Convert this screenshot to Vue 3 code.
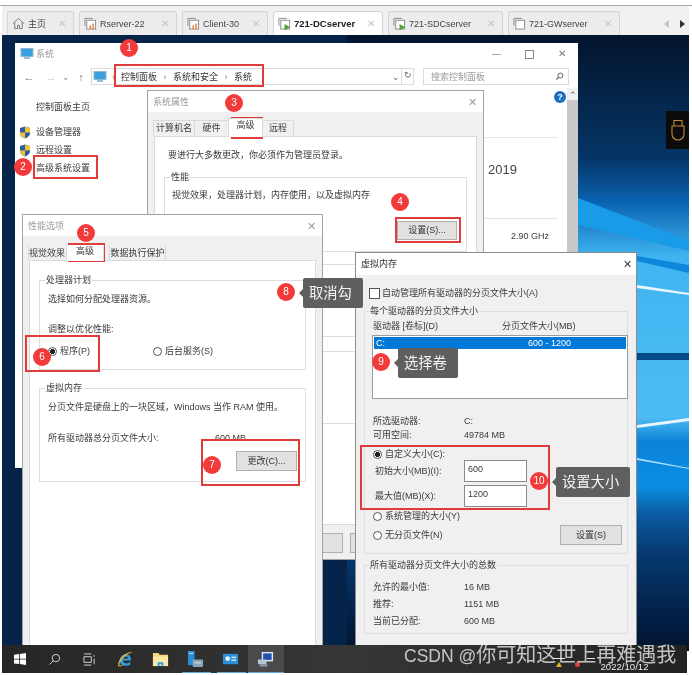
<template>
  <div class="shot">
    <div class="top-strip"></div>

    <div class="tabbar">
      <div v-for="t in tabs" :key="t.name" class="tab" :class="{ on: t.on }" :style="{ width: t.w + 'px' }">
        <svg v-if="t.kind === 'home'" class="tab-ico" viewBox="0 0 14 14">
          <path d="M1 7 7 1.500 13 7M3 6v6.500h3V9h2v3.500h3V6" fill="none" stroke="#777" stroke-width="1" />
        </svg>
        <svg v-else class="tab-ico" viewBox="0 0 14 14">
          <path d="M1 9.500V1.500h8.500" fill="none" stroke="#888" stroke-width="1" />
          <rect x="3" y="3.500" width="9.500" height="9.500" fill="#fff" stroke="#888" stroke-width="1" />
          <path v-if="t.kind === 'bars'" d="M6 13V9h1.500v4zM9 13V7h1.500v6z" fill="#e8762c" />
          <path v-if="t.kind === 'play'" d="M7 7.500l6 3.500-6 3.500z" fill="#4aa52e" />
        </svg>
        <span class="tab-name">{{ t.name }}</span>
        <span class="tab-x">✕</span>
      </div>
      <div class="tab-arrows"><i class="arr-l"></i><i class="arr-r"></i></div>
    </div>

    <div class="desktop">
      <svg class="wall" viewBox="0 0 687 616" preserveAspectRatio="none">
        <defs>
          <linearGradient id="sky" x1="0" y1="0" x2="0" y2="1">
            <stop offset="0" stop-color="#03142c" />
            <stop offset="0.2" stop-color="#053566" />
            <stop offset="0.27" stop-color="#0a62b0" />
            <stop offset="0.36" stop-color="#3fb4f0" />
            <stop offset="0.62" stop-color="#4dbcf4" />
            <stop offset="0.66" stop-color="#0a82d8" />
            <stop offset="0.73" stop-color="#0a8fe4" />
            <stop offset="0.78" stop-color="#0a5aa0" />
            <stop offset="0.84" stop-color="#063a70" />
            <stop offset="0.95" stop-color="#021e44" />
            <stop offset="1" stop-color="#02152f" />
          </linearGradient>
        </defs>
        <rect width="687" height="616" fill="url(#sky)" />
        <rect width="345" height="616" fill="#06244a" />
        <polygon points="576,163 687,206 687,216 576,190" fill="#1a9be8" />
        <polygon points="635,221 687,230 687,238 635,226" fill="#0d87dc" />
        <polygon points="635,250 687,258 687,260 635,253" fill="#e8f6ff" />
        <rect x="635" y="318" width="52" height="7" fill="#064a88" />
        <polygon points="635,390 687,383 687,386 635,393" fill="#e8f6ff" />
        <polygon points="635,423 687,433 687,434 635,425" fill="#a8dcfa" />
      </svg>
    </div>

    <!-- control panel window -->
    <div class="win win-sys">
      <div class="sys-title">
        <svg class="pc" viewBox="0 0 14 12">
          <rect x="1" y="0.500" width="12" height="8" fill="#3aa0e0" stroke="#8fb8d0" />
          <rect x="4" y="9" width="6" height="2" fill="#9cc0d8" />
        </svg>
        <span class="muted">系统</span>
        <span class="grow"></span>
        <span class="ctl">—</span>
        <i class="ctl-max"></i>
        <span class="ctl ctl-x">✕</span>
      </div>
      <div class="sys-nav">
        <span class="nav-arrow dark">←</span>
        <span class="nav-arrow">→</span>
        <span class="nav-caret">⌄</span>
        <span class="nav-arrow dark">↑</span>
        <div class="addr">
          <svg class="pc" viewBox="0 0 14 12">
            <rect x="1" y="0.500" width="12" height="8" fill="#3aa0e0" stroke="#8fb8d0" />
            <rect x="4" y="9" width="6" height="2" fill="#9cc0d8" />
          </svg>
          <span class="crumb first">›</span>
          <span>控制面板</span><span class="crumb">›</span><span>系统和安全</span><span class="crumb">›</span><span>系统</span>
          <span class="grow"></span>
          <span class="addr-end">⌄</span>
          <span class="addr-end refresh">↻</span>
        </div>
        <div class="search">
          <span class="muted">搜索控制面板</span>
          <svg viewBox="0 0 10 10" class="glass"><circle cx="6" cy="4" r="2.800" fill="none" stroke="#555" /><path d="M4 6 1.500 8.500" stroke="#555" stroke-width="1.200" /></svg>
        </div>
      </div>
      <div class="sys-body">
        <div class="side">
          <div class="side-home">控制面板主页</div>
          <div v-for="s in sideLinks" :key="s" class="side-link">
            <svg class="shield" viewBox="0 0 12 13">
              <path d="M6 .5 11 2v5c0 3-2.500 4.500-5 5.500C3.500 11.500 1 10 1 7V2z" fill="#2a5ca8" />
              <path d="M6 .5 11 2v4.500H6zM6 6.500v6C3.500 11.500 1 10 1 6.500z" fill="#f2c230" />
            </svg>
            <span class="link-text">{{ s }}</span>
          </div>
          <div class="side-link plain">高级系统设置</div>
        </div>
        <div class="sys-main">
          <div class="help">?</div>
          <div class="rule rule-a"></div>
          <div class="year">2019</div>
          <div class="rule rule-b"></div>
          <div class="ghz">2.90 GHz</div>
        </div>
        <div class="scroll"><span class="scroll-up">⌃</span></div>
      </div>
    </div>

    <!-- system properties -->
    <div class="win win-props">
      <div class="dlg-title"><span class="muted">系统属性</span><span class="grow"></span><span class="dlg-x">✕</span></div>
      <div class="tabs props-tabs">
        <span class="dtab w42">计算机名</span>
        <span class="dtab w35">硬件</span>
        <span class="dtab w35 on">高级</span>
        <span class="dtab w32">远程</span>
      </div>
      <div class="panel props-panel">
        <div class="props-note">要进行大多数更改，你必须作为管理员登录。</div>
        <div class="group props-g1">
          <span class="legend">性能</span>
          <div>视觉效果，处理器计划，内存使用，以及虚拟内存</div>
          <div class="btn props-btn">设置(S)...</div>
        </div>
        <div class="group props-g2"></div>
        <div class="group props-g3"></div>
      </div>
      <div class="props-foot">
        <span class="btn foot-btn"></span>
        <span class="btn foot-btn"></span>
      </div>
    </div>

    <!-- performance options -->
    <div class="win win-perf">
      <div class="dlg-title perf-title"><span class="muted">性能选项</span><span class="grow"></span><span class="dlg-x">✕</span></div>
      <div class="tabs perf-tabs">
        <span class="dtab w39">视觉效果</span>
        <span class="dtab w38 on">高级</span>
        <span class="dtab w57">数据执行保护</span>
      </div>
      <div class="panel perf-panel">
        <div class="group perf-g1">
          <span class="legend">处理器计划</span>
          <div>选择如何分配处理器资源。</div>
          <div class="perf-adjust">调整以优化性能:</div>
          <div class="perf-radios">
            <span class="radio on"></span><span>程序(P)</span>
            <span class="radio second"></span><span>后台服务(S)</span>
          </div>
        </div>
        <div class="group perf-g2">
          <span class="legend">虚拟内存</span>
          <div>分页文件是硬盘上的一块区域，Windows 当作 RAM 使用。</div>
          <div class="perf-total"><span class="perf-total-l">所有驱动器总分页文件大小:</span><span>600 MB</span></div>
          <div class="btn perf-btn">更改(C)...</div>
        </div>
      </div>
    </div>

    <!-- virtual memory -->
    <div class="win win-vm">
      <div class="dlg-title vm-title"><span>虚拟内存</span><span class="grow"></span><span class="dlg-x dark">✕</span></div>
      <div class="vm-check"><i class="checkbox"></i><span>自动管理所有驱动器的分页文件大小(A)</span></div>
      <div class="group vm-g1">
        <span class="legend">每个驱动器的分页文件大小</span>
        <div class="vm-head"><span class="vm-col">驱动器 [卷标](D)</span><span>分页文件大小(MB)</span></div>
        <div class="vm-list">
          <div class="vm-sel"><span class="vm-sel-c">C:</span><span>600 - 1200</span></div>
        </div>
        <div class="vm-info"><span class="vm-k">所选驱动器:</span><span>C:</span></div>
        <div class="vm-info"><span class="vm-k">可用空间:</span><span>49784 MB</span></div>
        <div class="vm-radio vm-custom"><span class="radio on"></span><span>自定义大小(C):</span></div>
        <div class="vm-field"><span class="vm-flabel">初始大小(MB)(I):</span><div class="vm-input">600</div></div>
        <div class="vm-field"><span class="vm-flabel">最大值(MB)(X):</span><div class="vm-input">1200</div></div>
        <div class="vm-radio vm-sys"><span class="radio"></span><span>系统管理的大小(Y)</span></div>
        <div class="vm-none">
          <div class="vm-radio"><span class="radio"></span><span>无分页文件(N)</span></div>
          <div class="btn vm-set">设置(S)</div>
        </div>
      </div>
      <div class="group vm-g2">
        <span class="legend">所有驱动器分页文件大小的总数</span>
        <div v-for="r in totals" :key="r.k" class="vm-total"><span class="vm-k">{{ r.k }}</span><span>{{ r.v }}</span></div>
      </div>
      <div class="vm-foot">
        <span class="btn vm-foot-btn ok"></span>
        <span class="btn vm-foot-btn"></span>
      </div>
    </div>

    <!-- usb side tab -->
    <div class="usb">
      <svg viewBox="0 0 14 22" class="usb-ico">
        <path d="M3 7V1.500h8V7M1 7h12v8a6 6 0 0 1-12 0z" fill="none" stroke="#c08a38" stroke-width="1.100" />
      </svg>
    </div>

    <!-- annotations -->
    <div v-for="(b, i) in boxes" :key="'b' + i" class="red-box" :style="boxStyle(b)"></div>
    <div v-for="d in dots" :key="d.n" class="dot" :style="{ left: d.x - 9 + 'px', top: d.y - 9 + 'px' }">{{ d.n }}</div>
    <div v-for="t in tips" :key="t.text" class="tip" :style="{ left: t.x + 'px', top: t.y + 'px', width: t.w + 'px' }">{{ t.text }}</div>

    <!-- taskbar -->
    <div class="taskbar">
      <div class="tb-item">
        <svg viewBox="0 0 12 12" class="tb-win"><path d="M0 1.700 5 1v4.700H0zM5.800.9 12 0v5.700H5.800zM0 6.400h5v4.700l-5-.7zM5.800 6.400H12V12l-6.200-.9z" fill="#fff" /></svg>
      </div>
      <div class="tb-item">
        <svg viewBox="0 0 14 14" class="tb-ico"><circle cx="8.500" cy="5.500" r="4" fill="none" stroke="#d8d8d8" /><path d="M5.500 8.500 1.500 12.500" stroke="#d8d8d8" /></svg>
      </div>
      <div class="tb-item">
        <svg viewBox="0 0 14 14" class="tb-ico"><path d="M1 1h8M1 13h8M1 4h8v6H1zM12 2v2M12 6v6" fill="none" stroke="#d8d8d8" /></svg>
      </div>
      <div class="tb-item">
        <svg viewBox="0 0 18 18" class="tb-big">
          <path d="M3 10.500C3 6.500 6 3.500 9.500 3.500s5.500 3 5.500 6.500H6.500c.2 3.500 5 4 7.500 1.500v3c-4 2.500-11 1-11-4z M6.500 8h5.500c-.2-2.500-5-2.500-5.500 0z" fill="#2f9fe0" fill-rule="evenodd" />
          <path d="M16 1.500c-3-1-7 1-11 5C2 9.500.5 14 1.500 16c1 1.200 3.500 0 5.500-1.500-2 .5-4 1.300-4.500.5-.5-1 1-4 3-6.500 3-3.500 7-6.500 9-6.500z" fill="#e8b830" />
        </svg>
      </div>
      <div class="tb-item">
        <svg viewBox="0 0 18 16" class="tb-big">
          <path d="M1 1h6l1 2h9v12H1z" fill="#f5d77e" />
          <rect x="1" y="5" width="16" height="10" fill="#fbe9a8" />
          <path d="M6 15v-4h6v4h-2v-2H8v2z" fill="#2f9fe0" />
        </svg>
      </div>
      <div class="tb-item under">
        <svg viewBox="0 0 18 18" class="tb-big">
          <rect x="1" y="0" width="7" height="15" fill="#2a8fd8" />
          <rect x="2" y="2" width="5" height="1" fill="#bfe2f8" />
          <rect x="6" y="9" width="11" height="8" rx="1" fill="#8aa4b8" />
          <rect x="8" y="12" width="7" height="1" fill="#e6eef4" />
        </svg>
      </div>
      <div class="tb-item under">
        <svg viewBox="0 0 18 14" class="tb-big">
          <rect x="1" y="1" width="16" height="11" fill="#2a8fd8" />
          <circle cx="6" cy="6" r="2.500" fill="#e8f4fc" />
          <rect x="10" y="4" width="5" height="1.500" fill="#cfe8f8" />
          <rect x="10" y="7" width="5" height="1.500" fill="#cfe8f8" />
        </svg>
      </div>
      <div class="tb-item under lit">
        <svg viewBox="0 0 18 18" class="tb-big">
          <rect x="5" y="1" width="12" height="10" fill="#dfe8f2" />
          <rect x="6.500" y="2.500" width="9" height="7" fill="#2450b0" />
          <path d="M1 9h9v5H1z" fill="#b8c4d2" />
          <rect x="3" y="14" width="8" height="2.500" fill="#8c98a8" />
        </svg>
      </div>
      <div class="tray">
        <i class="tray-mark m1"></i>
        <i class="tray-mark m2"></i>
        <i class="tray-warn"></i>
        <i class="tray-err"></i>
        <span class="tray-date">2022/10/12</span>
      </div>
    </div>
    <div class="watermark"><span class="wm-latin">CSDN @</span>你可知这世上再难遇我</div>
  </div>
</template>

<script setup>
const tabs = [
  { name: '主页', kind: 'home', w: 67 },
  { name: 'Rserver-22', kind: 'bars', w: 98 },
  { name: 'Client-30', kind: 'bars', w: 86 },
  { name: '721-DCserver', kind: 'play', w: 110, on: true },
  { name: '721-SDCserver', kind: 'play', w: 115 },
  { name: '721-GWserver', kind: 'plain', w: 112 }
]

const sideLinks = ['设备管理器', '远程设置']

const totals = [
  { k: '允许的最小值:', v: '16 MB' },
  { k: '推荐:', v: '1151 MB' },
  { k: '当前已分配:', v: '600 MB' }
]

const boxes = [
  { x: 114, y: 64, w: 150, h: 23 },
  { x: 33, y: 155, w: 65, h: 24 },
  { x: 231, y: 117, w: 32, h: 22 },
  { x: 395, y: 217, w: 66, h: 26 },
  { x: 68, y: 243, w: 37, h: 19 },
  { x: 25, y: 335, w: 75, h: 37 },
  { x: 201, y: 439, w: 99, h: 47 },
  { x: 360, y: 445, w: 190, h: 65 }
]

const dots = [
  { n: 1, x: 129, y: 48 },
  { n: 2, x: 23, y: 167 },
  { n: 3, x: 234, y: 103 },
  { n: 4, x: 400, y: 202 },
  { n: 5, x: 86, y: 233 },
  { n: 6, x: 42, y: 357 },
  { n: 7, x: 212, y: 465 },
  { n: 8, x: 286, y: 292 },
  { n: 9, x: 381, y: 362 },
  { n: 10, x: 539, y: 481 }
]

const tips = [
  { text: '取消勾', x: 303, y: 278, w: 60 },
  { text: '选择卷', x: 398, y: 348, w: 60 },
  { text: '设置大小', x: 556, y: 467, w: 74 }
]

function boxStyle(b) {
  return { left: b.x + 'px', top: b.y + 'px', width: b.w + 'px', height: b.h + 'px' }
}
</script>

<style>
html,
body {
  margin: 0;
  background: #fff;
}
</style>

<style scoped>
.shot {
  position: relative;
  width: 692px;
  height: 675px;
  overflow: hidden;
  background: #fff;
  font: 9px/12px "Liberation Sans", "Noto Sans CJK SC", sans-serif;
  color: #3a3a3a;
  display: flex;
  flex-direction: column;
  filter: blur(0.4px);
}
.grow {
  flex: 1;
}
.muted {
  color: #9a9a9a;
}

.top-strip {
  height: 5px;
  border-bottom: 1px solid #a8a8a8;
  flex: none;
}
.tabbar {
  height: 29px;
  flex: none;
  margin: 0 3px 0 2px;
  padding: 5px 0 0 5px;
  box-sizing: border-box;
  background: #f1f1f1;
  display: flex;
  gap: 5px;
  position: relative;
}
.tab {
  box-sizing: border-box;
  height: 24px;
  background: #ececec;
  border: 1px solid #d4d4d4;
  border-bottom: 0;
  border-radius: 3px 3px 0 0;
  display: flex;
  align-items: center;
  padding: 0 7px 0 4px;
  font-size: 9px;
  color: #444;
}
.tab.on {
  background: #fff;
  font-weight: bold;
  font-size: 9.500px;
  color: #222;
}
.tab-ico {
  width: 13px;
  height: 13px;
  margin-right: 3px;
  flex: none;
}
.tab-name {
  flex: 1;
  white-space: nowrap;
}
.tab-x {
  color: #c4c4c4;
  font-size: 10px;
  font-weight: normal;
}
.tab-arrows {
  position: absolute;
  right: 4px;
  top: 14px;
  display: flex;
  gap: 11px;
}
.arr-l {
  border: 4px solid transparent;
  border-left: 0;
  border-right: 5px solid #c4c4c4;
}
.arr-r {
  border: 4px solid transparent;
  border-right: 0;
  border-left: 5px solid #333;
}

.desktop {
  flex: none;
  height: 616px;
  margin: 0 3px 0 2px;
}
.wall {
  display: block;
  width: 100%;
  height: 100%;
}

/* windows sit where they were dragged on the desktop */
.win {
  position: absolute;
  box-sizing: border-box;
}
.win-sys {
  left: 15px;
  top: 43px;
  width: 563px;
  height: 425px;
  background: #fff;
  display: flex;
  flex-direction: column;
}
.sys-title {
  height: 22px;
  flex: none;
  display: flex;
  align-items: center;
  padding: 0 6px 0 5px;
  gap: 2px;
}
.pc {
  width: 14px;
  height: 12px;
  flex: none;
}
.ctl {
  width: 33px;
  text-align: center;
  color: #777;
  font-size: 9px;
}
.ctl-max {
  width: 7px;
  height: 7px;
  border: 1px solid #888;
  margin: 0 16px 0 10px;
}
.ctl-x {
  width: 20px;
  font-size: 10px;
}
.sys-nav {
  height: 19px;
  margin-top: 2px;
  flex: none;
  display: flex;
  align-items: center;
  padding-left: 7px;
}
.nav-arrow {
  width: 14px;
  font-size: 11px;
  color: #c8c8c8;
  text-align: center;
}
.nav-arrow.dark {
  color: #777;
}
.nav-arrow + .nav-arrow {
  margin-left: 8px;
}
.nav-caret {
  width: 10px;
  margin: 0 3px 0 3px;
  text-align: center;
  color: #888;
  line-height: 8px;
}
.addr {
  margin-left: 3px;
  width: 323px;
  height: 17px;
  border: 1px solid #dcdcdc;
  box-sizing: border-box;
  display: flex;
  align-items: center;
  padding-left: 1px;
  gap: 6px;
  color: #333;
}
.crumb {
  color: #777;
  margin: 0 0.500px;
}
.crumb.first {
  margin: 0 0 0 -1px;
}
.addr-end {
  width: 11px;
  text-align: center;
  color: #666;
}
.refresh {
  border-left: 1px solid #dcdcdc;
  margin-left: -6px;
  height: 15px;
}
.search {
  margin-left: 9px;
  width: 146px;
  height: 17px;
  border: 1px solid #dcdcdc;
  box-sizing: border-box;
  display: flex;
  align-items: center;
  justify-content: space-between;
  padding: 0 4px 0 7px;
}
.glass {
  width: 9px;
  height: 9px;
}
.sys-body {
  flex: 1;
  display: flex;
  padding-top: 2px;
  min-height: 0;
}
.side {
  width: 132px;
  flex: none;
  padding: 10px 0 0 4px;
  box-sizing: border-box;
}
.side-home {
  margin: 0 0 7px 17px;
  line-height: 18px;
}
.side-link {
  display: flex;
  align-items: center;
  gap: 5px;
  line-height: 18px;
}
.side-link.plain {
  margin-left: 17px;
}
.shield {
  width: 12px;
  height: 13px;
  flex: none;
}
.sys-main {
  flex: 1;
  padding: 3px 9px 0 0;
}
.help {
  width: 12px;
  height: 12px;
  margin-left: auto;
  margin-right: -8px;
  border-radius: 50%;
  background: #1c6fc0;
  color: #fff;
  font-weight: bold;
  font-size: 9px;
  text-align: center;
}
.rule {
  height: 1px;
  background: #e4e4e4;
}
.rule-a {
  margin-top: 34px;
}
.year {
  margin: 22px 0 0 341px;
  font-size: 13px;
  line-height: 20px;
  color: #444;
}
.rule-b {
  margin-top: 38px;
}
.ghz {
  margin-top: 11px;
  padding-right: 9px;
  text-align: right;
}
.scroll {
  width: 11px;
  flex: none;
  background: #c9c9c9;
}
.scroll-up {
  display: block;
  height: 12px;
  background: #f0f0f0;
  text-align: center;
  font-size: 9px;
  line-height: 14px;
  color: #555;
}

.win-props {
  left: 147px;
  top: 90px;
  width: 337px;
  height: 470px;
  background: #f0f0f0;
  border: 1px solid #a4a4a4;
}
.dlg-title {
  height: 21px;
  background: #fff;
  display: flex;
  align-items: center;
  padding: 0 6px 0 5px;
}
.dlg-x {
  width: 10px;
  text-align: center;
  color: #9a9a9a;
  font-size: 11px;
}
.dlg-x.dark {
  color: #333;
}
.tabs {
  display: flex;
  align-items: flex-end;
}
.dtab {
  box-sizing: border-box;
  height: 16px;
  border: 1px solid #dadada;
  border-bottom: 0;
  margin-left: -1px;
  background: #f0f0f0;
  text-align: center;
  line-height: 15px;
  white-space: nowrap;
}
.dtab.on {
  background: #fff;
  height: 19px;
  position: relative;
  z-index: 1;
  margin-bottom: -1px;
  line-height: 13px;
}
.w32 {
  width: 32px;
}
.w35 {
  width: 35px;
}
.w38 {
  width: 38px;
}
.w39 {
  width: 39px;
}
.w42 {
  width: 42px;
}
.w57 {
  width: 57px;
}
.props-tabs {
  height: 16px;
  margin: 8px 0 0 6px;
}
.panel {
  background: #fff;
  border: 1px solid #dadada;
}
.props-panel {
  margin: 0 6px;
  height: 389px;
  box-sizing: border-box;
  padding: 12px 9px 0;
}
.props-note {
  margin-left: 4px;
}
.group {
  position: relative;
  border: 1px solid #dedede;
  box-sizing: border-box;
}
.legend {
  position: absolute;
  top: -7px;
  left: 5px;
  padding: 0 1px;
  background: #fff;
  white-space: nowrap;
}
.props-g1 {
  height: 75px;
  margin-top: 16px;
  padding: 11px 8px 0 7px;
}
.btn {
  box-sizing: border-box;
  background: #e1e1e1;
  border: 1px solid #b0b0b0;
  text-align: center;
  color: #333;
  white-space: nowrap;
}
.props-btn {
  width: 60px;
  height: 19px;
  line-height: 17px;
  margin: 20px 1px 0 auto;
}
.props-g2 {
  height: 73px;
  margin-top: 12px;
}
.props-g3 {
  height: 73px;
  margin-top: 14px;
}
.props-foot {
  display: flex;
  gap: 7px;
  margin: 8px 0 0 135px;
}
.foot-btn {
  width: 60px;
  height: 20px;
  display: block;
}

.win-perf {
  left: 22px;
  top: 214px;
  width: 301px;
  height: 431px;
  background: #f0f0f0;
  border: 1px solid #a4a4a4;
  border-bottom: 0;
}
.perf-tabs {
  height: 12px;
  margin: 12px 0 0 6px;
}
.perf-tabs .dtab {
  height: 15px;
  line-height: 14px;
  margin-top: -3px;
  border-color: transparent #dadada;
}
.perf-tabs .dtab:first-child {
  text-align: right;
  padding-right: 1px;
}
.perf-tabs .dtab:last-child {
  margin-left: 5px;
}
.perf-tabs .dtab.on {
  height: 16px;
  line-height: 11px;
}
.perf-panel {
  margin: 0 6px;
  height: 386px;
  box-sizing: border-box;
  padding: 19px 9px 0;
  border-bottom: 0;
}
.perf-g1 {
  height: 90px;
  padding: 12px 8px 0;
}
.perf-adjust {
  margin-top: 18px;
}
.perf-radios {
  margin-top: 10px;
  display: flex;
  align-items: center;
  gap: 3px;
}
.radio {
  box-sizing: border-box;
  width: 9px;
  height: 9px;
  border: 1px solid #555;
  border-radius: 50%;
  background: #fff;
  flex: none;
  display: block;
}
.radio.on {
  background: radial-gradient(circle, #222 0 2.300px, #fff 2.800px);
}
.radio.second {
  margin-left: 60px;
}
.perf-g2 {
  height: 94px;
  margin-top: 18px;
  padding: 12px 8px 0;
}
.perf-total {
  margin-top: 19px;
  display: flex;
}
.perf-total-l {
  width: 167px;
}
.perf-btn {
  width: 61px;
  height: 20px;
  line-height: 18px;
  margin: 7px 0 0 auto;
}

.win-vm {
  left: 355px;
  top: 252px;
  width: 282px;
  height: 410px;
  background: #f0f0f0;
  border: 1px solid #8c8c8c;
}
.vm-title {
  height: 22px;
  color: #333;
  padding: 0 4px 0 5px;
}
.vm-check {
  display: flex;
  align-items: center;
  gap: 2px;
  margin: 12px 0 0 13px;
}
.checkbox {
  width: 9px;
  height: 9px;
  border: 1px solid #555;
  background: #fff;
  display: block;
  flex: none;
}
.win-vm .legend {
  background: #f0f0f0;
  left: 4px;
}
.vm-g1 {
  width: 264px;
  height: 243px;
  margin: 12px 0 0 8px;
  padding-top: 8px;
}
.vm-head {
  display: flex;
  padding-left: 8px;
}
.vm-col {
  width: 129px;
}
.vm-list {
  box-sizing: border-box;
  width: 256px;
  height: 64px;
  margin: 3px 0 0 7px;
  background: #fff;
  border: 1px solid #9c9c9c;
  padding: 1px;
}
.vm-sel {
  display: flex;
  height: 12px;
  background: #0078d7;
  color: #fff;
}
.vm-sel-c {
  width: 152px;
  padding-left: 2px;
}
.vm-info {
  display: flex;
  line-height: 14px;
  padding-left: 8px;
}
.vm-list + .vm-info {
  margin-top: 15px;
}
.vm-k {
  width: 91px;
  flex: none;
}
.vm-radio {
  display: flex;
  align-items: center;
  gap: 3px;
  padding-left: 8px;
}
.vm-custom {
  margin-top: 6px;
}
.vm-field {
  display: flex;
  align-items: center;
  height: 22px;
  margin-bottom: 3px;
  padding-left: 10px;
}
.vm-flabel {
  width: 89px;
  flex: none;
}
.vm-input {
  box-sizing: border-box;
  width: 63px;
  height: 22px;
  background: #fff;
  border: 1px solid #8a8a8a;
  padding: 2px 3px;
}
.vm-sys {
  margin-top: 2px;
}
.vm-none {
  display: flex;
  align-items: center;
  justify-content: space-between;
  height: 20px;
  margin-top: 3px;
  padding-right: 5px;
}
.vm-set {
  width: 62px;
  height: 20px;
  line-height: 18px;
}
.vm-g2 {
  width: 264px;
  height: 69px;
  margin: 11px 0 0 8px;
  padding-top: 13px;
}
.vm-total {
  display: flex;
  line-height: 17px;
  padding-left: 8px;
}
.vm-foot {
  display: flex;
  gap: 7px;
  margin: 11px 0 0 145px;
}
.vm-foot-btn {
  width: 62px;
  height: 20px;
}
.vm-foot-btn.ok {
  border-color: #0078d7;
}

.usb {
  position: absolute;
  left: 666px;
  top: 111px;
  width: 23px;
  height: 38px;
  background: #0b0b0b;
  display: flex;
  align-items: center;
  justify-content: center;
}
.usb-ico {
  width: 14px;
  height: 22px;
}

.red-box {
  position: absolute;
  box-sizing: border-box;
  border: 2px solid #e03c3c;
}
.dot {
  position: absolute;
  width: 18px;
  height: 18px;
  border-radius: 50%;
  background: #f23a3a;
  color: #fff;
  font-size: 10px;
  line-height: 18px;
  text-align: center;
}
.tip {
  position: absolute;
  box-sizing: border-box;
  height: 30px;
  padding-left: 6px;
  border-radius: 2px;
  background: #5f5f5f;
  color: #f4f4f4;
  font-size: 14.300px;
  line-height: 30px;
  white-space: nowrap;
}
.tip::before {
  content: "";
  position: absolute;
  left: -4px;
  top: 11px;
  border: 4px solid transparent;
  border-left: 0;
  border-right: 4px solid #5f5f5f;
}

.taskbar {
  position: absolute;
  left: 2px;
  top: 645px;
  width: 685px;
  height: 28px;
  background: linear-gradient(90deg, #262626, #363636 50%, #222);
  display: flex;
}
.tb-item {
  position: relative;
  width: 35.200px;
  flex: none;
  display: flex;
  align-items: center;
  justify-content: center;
}
.tb-item.under::after {
  content: "";
  position: absolute;
  left: 4px;
  right: 2px;
  bottom: 0;
  height: 1px;
  background: #6aa8d8;
}
.tb-item.lit {
  background: #4a4a4a;
}
.tb-item.lit::after {
  left: 0;
  right: 0;
}
.tb-win {
  width: 12px;
  height: 12px;
}
.tb-ico {
  width: 13px;
  height: 13px;
}
.tb-big {
  width: 17px;
  height: 17px;
}
.tray {
  flex: 1;
  position: relative;
}
.tray-mark {
  position: absolute;
  top: 13px;
  height: 1px;
  background: #e8e8e8;
}
.m1 {
  left: 269px;
  width: 12px;
}
.m2 {
  left: 303px;
  width: 8px;
}
.tray-warn {
  position: absolute;
  left: 272px;
  top: 17px;
  border: 3px solid transparent;
  border-top: 0;
  border-bottom: 5px solid #e0b030;
}
.tray-err {
  position: absolute;
  left: 291px;
  top: 17px;
  width: 5px;
  height: 5px;
  background: #e04040;
  border-radius: 50%;
}
.tray-date {
  position: absolute;
  left: 317px;
  top: 16px;
  color: #e8e8e8;
  font-size: 9.600px;
}
.watermark {
  position: absolute;
  left: 404px;
  top: 642px;
  color: rgba(255, 255, 255, 0.72);
  font: 20px/26px "Liberation Sans", "Noto Sans CJK SC", sans-serif;
  white-space: nowrap;
}
.wm-latin {
  font-size: 17.500px;
}
</style>
